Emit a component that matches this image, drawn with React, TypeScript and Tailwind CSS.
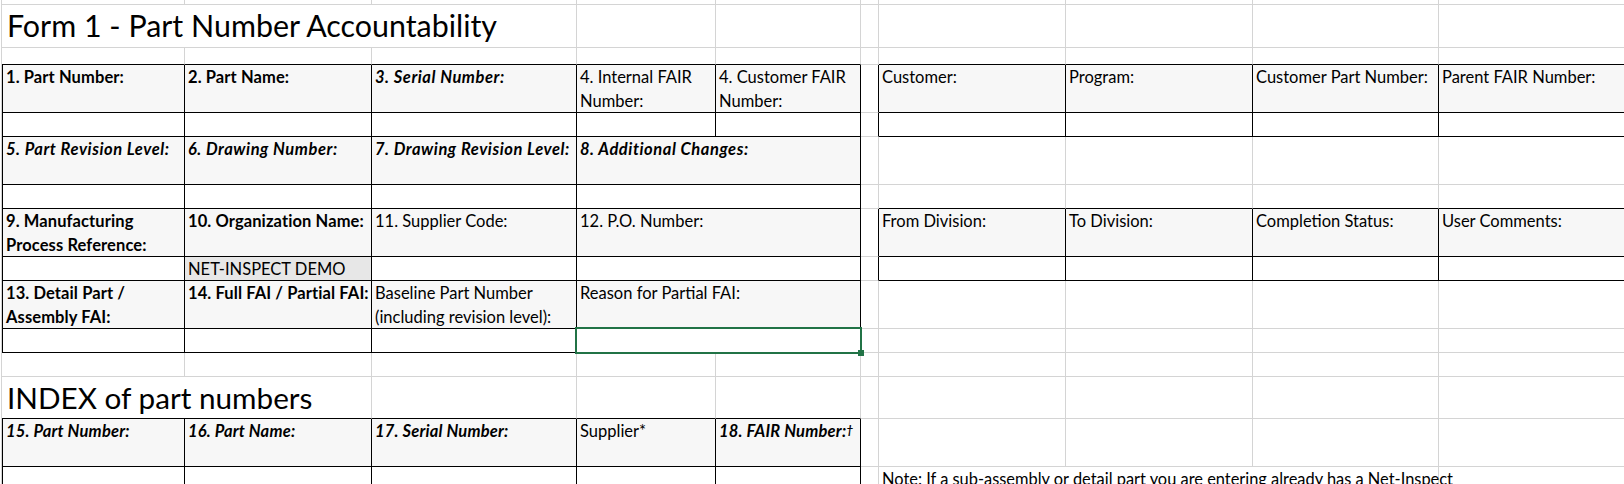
import type { ReactNode } from 'react';

// Excel-like sheet: column widths and row heights measured off the gridlines
const GRID = 'border-r border-b border-[#d4d4d4]';
const GRID_TOP = 'border-r border-b border-[#d4d4d4] border-b-black';
const GRID_EDGE = 'border-r border-b border-[#d4d4d4] border-r-black';
const HEAD = 'border-r border-b border-black bg-[#f7f7f7] pl-[3px] leading-[24px] whitespace-nowrap';
const VAL = 'border-r border-b border-black';

function Blank({ className = GRID }: { className?: string }) {
  return <div className={className} />;
}

function Head({
  children,
  first,
  span,
  weight,
  tight,
}: {
  children?: ReactNode;
  first?: boolean;
  span?: boolean;
  weight?: 'b' | 'bi' | 'r';
  tight?: boolean;
}) {
  let w = 'font-normal';
  if (weight === 'b') w = 'font-bold tracking-[0.1px]';
  if (weight === 'bi') w = tight ? 'font-bold italic tracking-[0.2px]' : 'font-bold italic tracking-[0.55px]';
  return (
    <div className={`${HEAD} ${w} ${first ? 'border-l' : ''} ${span ? 'col-span-2' : ''}`}>
      {children}
    </div>
  );
}

function Val({ first, span, children, className = '' }: { first?: boolean; span?: boolean; children?: ReactNode; className?: string }) {
  return (
    <div className={`${VAL} ${first ? 'border-l' : ''} ${span ? 'col-span-2' : ''} ${className}`}>{children}</div>
  );
}

export default function App() {
  return (
    <div className="w-[1624px] h-[484px] overflow-hidden bg-white pl-px text-black text-[16.5px] font-[family-name:Lato,'Liberation_Sans',sans-serif]">
      <div className="grid w-max border-l border-[#d4d4d4] grid-cols-[183px_187px_205px_139px_145px_18px_187px_187px_186px_187px] grid-rows-[5px_43px_17px_48px_24px_48px_24px_48px_24px_48px_24px_24px_42px_48px_24px]">
        {/* row 0 */}
        <Blank /><Blank /><Blank /><Blank /><Blank /><Blank /><Blank /><Blank /><Blank /><Blank />

        {/* title */}
        <div className={`${GRID} col-span-3 pl-[5px] pt-[2px] text-[30.4px] leading-[36px] whitespace-nowrap`}>
          Form 1 - Part Number Accountability
        </div>
        <Blank /><Blank /><Blank /><Blank /><Blank /><Blank /><Blank />

        {/* spacer above tables */}
        <Blank className={GRID_TOP} /><Blank className={GRID_TOP} /><Blank className={GRID_TOP} /><Blank className={GRID_TOP} /><Blank className={GRID_TOP} />
        <Blank />
        <Blank className={GRID_TOP} /><Blank className={GRID_TOP} /><Blank className={GRID_TOP} /><Blank className={GRID_TOP} />

        {/* 1-4 */}
        <Head first weight="b">1. Part Number:</Head>
        <Head weight="b">2. Part Name:</Head>
        <Head weight="bi">3. Serial Number:</Head>
        <Head>4. Internal FAIR<br />Number:</Head>
        <Head>4. Customer FAIR<br />Number:</Head>
        <Blank className={GRID_EDGE} />
        <Head>Customer:</Head>
        <Head>Program:</Head>
        <Head>Customer Part Number:</Head>
        <Head>Parent FAIR Number:</Head>

        <Val first /><Val /><Val /><Val /><Val />
        <Blank className={GRID_EDGE} />
        <Val /><Val /><Val /><Val />

        {/* 5-8 */}
        <Head first weight="bi">5. Part Revision Level:</Head>
        <Head weight="bi">6. Drawing Number:</Head>
        <Head weight="bi">7. Drawing Revision Level:</Head>
        <Head span weight="bi">8. Additional Changes:</Head>
        <Blank /><Blank /><Blank /><Blank /><Blank />

        <Val first /><Val /><Val /><Val span />
        <Blank />
        <Blank className={GRID_TOP} /><Blank className={GRID_TOP} /><Blank className={GRID_TOP} /><Blank className={GRID_TOP} />

        {/* 9-12 */}
        <Head first weight="b">9. Manufacturing<br />Process Reference:</Head>
        <Head weight="b">10. Organization Name:</Head>
        <Head>11. Supplier Code:</Head>
        <Head span>12. P.O. Number:</Head>
        <Blank className={GRID_EDGE} />
        <Head>From Division:</Head>
        <Head>To Division:</Head>
        <Head>Completion Status:</Head>
        <Head>User Comments:</Head>

        <Val first />
        <Val className="bg-[#e7e7e7] pl-[3px] leading-[24px] whitespace-nowrap">NET-INSPECT DEMO</Val>
        <Val /><Val span />
        <Blank className={GRID_EDGE} />
        <Val /><Val /><Val /><Val />

        {/* 13-14 */}
        <Head first weight="b">13. Detail Part /<br />Assembly FAI:</Head>
        <Head weight="b">14. Full FAI / Partial FAI:</Head>
        <Head>Baseline Part Number<br />(including revision level):</Head>
        <Head span>Reason for Partial FAI:</Head>
        <Blank /><Blank /><Blank /><Blank /><Blank />

        <Val first /><Val /><Val />
        <Val span className="relative">
          {/* active cell */}
          <div className="absolute left-[-2px] top-[-2px] right-[-2px] bottom-[-2px] z-10 border-2 border-[#217346]">
            <div className="absolute right-[-4px] bottom-[-4px] w-[6px] h-[6px] bg-[#217346]" />
          </div>
        </Val>
        <Blank /><Blank /><Blank /><Blank /><Blank />

        {/* empty row */}
        <Blank /><Blank /><Blank /><Blank /><Blank /><Blank /><Blank /><Blank /><Blank /><Blank />

        {/* index title */}
        <div className={`${GRID_TOP} col-span-2 pl-[5px] pt-[3px] text-[29.7px] leading-[36px] whitespace-nowrap`}>
          INDEX of part numbers
        </div>
        <Blank className={GRID_TOP} /><Blank className={GRID_TOP} /><Blank className={GRID_TOP} />
        <Blank /><Blank /><Blank /><Blank /><Blank />

        {/* 15-18 */}
        <Head first weight="bi" tight>15. Part Number:</Head>
        <Head weight="bi" tight>16. Part Name:</Head>
        <Head weight="bi" tight>17. Serial Number:</Head>
        <Head>Supplier*</Head>
        <Head weight="bi" tight>
          18. FAIR Number:<span className="relative top-[-3px] text-[12px] tracking-normal">†</span>
        </Head>
        <Blank /><Blank /><Blank /><Blank /><Blank />

        <Val first /><Val /><Val /><Val /><Val />
        <Blank />
        <div className={`${GRID} col-span-3 pl-[3px] text-[16.4px] leading-[24px] whitespace-nowrap`}>
          Note: If a sub-assembly or detail part you are entering already has a Net-Inspect
        </div>
        <Blank />
      </div>
    </div>
  );
}
